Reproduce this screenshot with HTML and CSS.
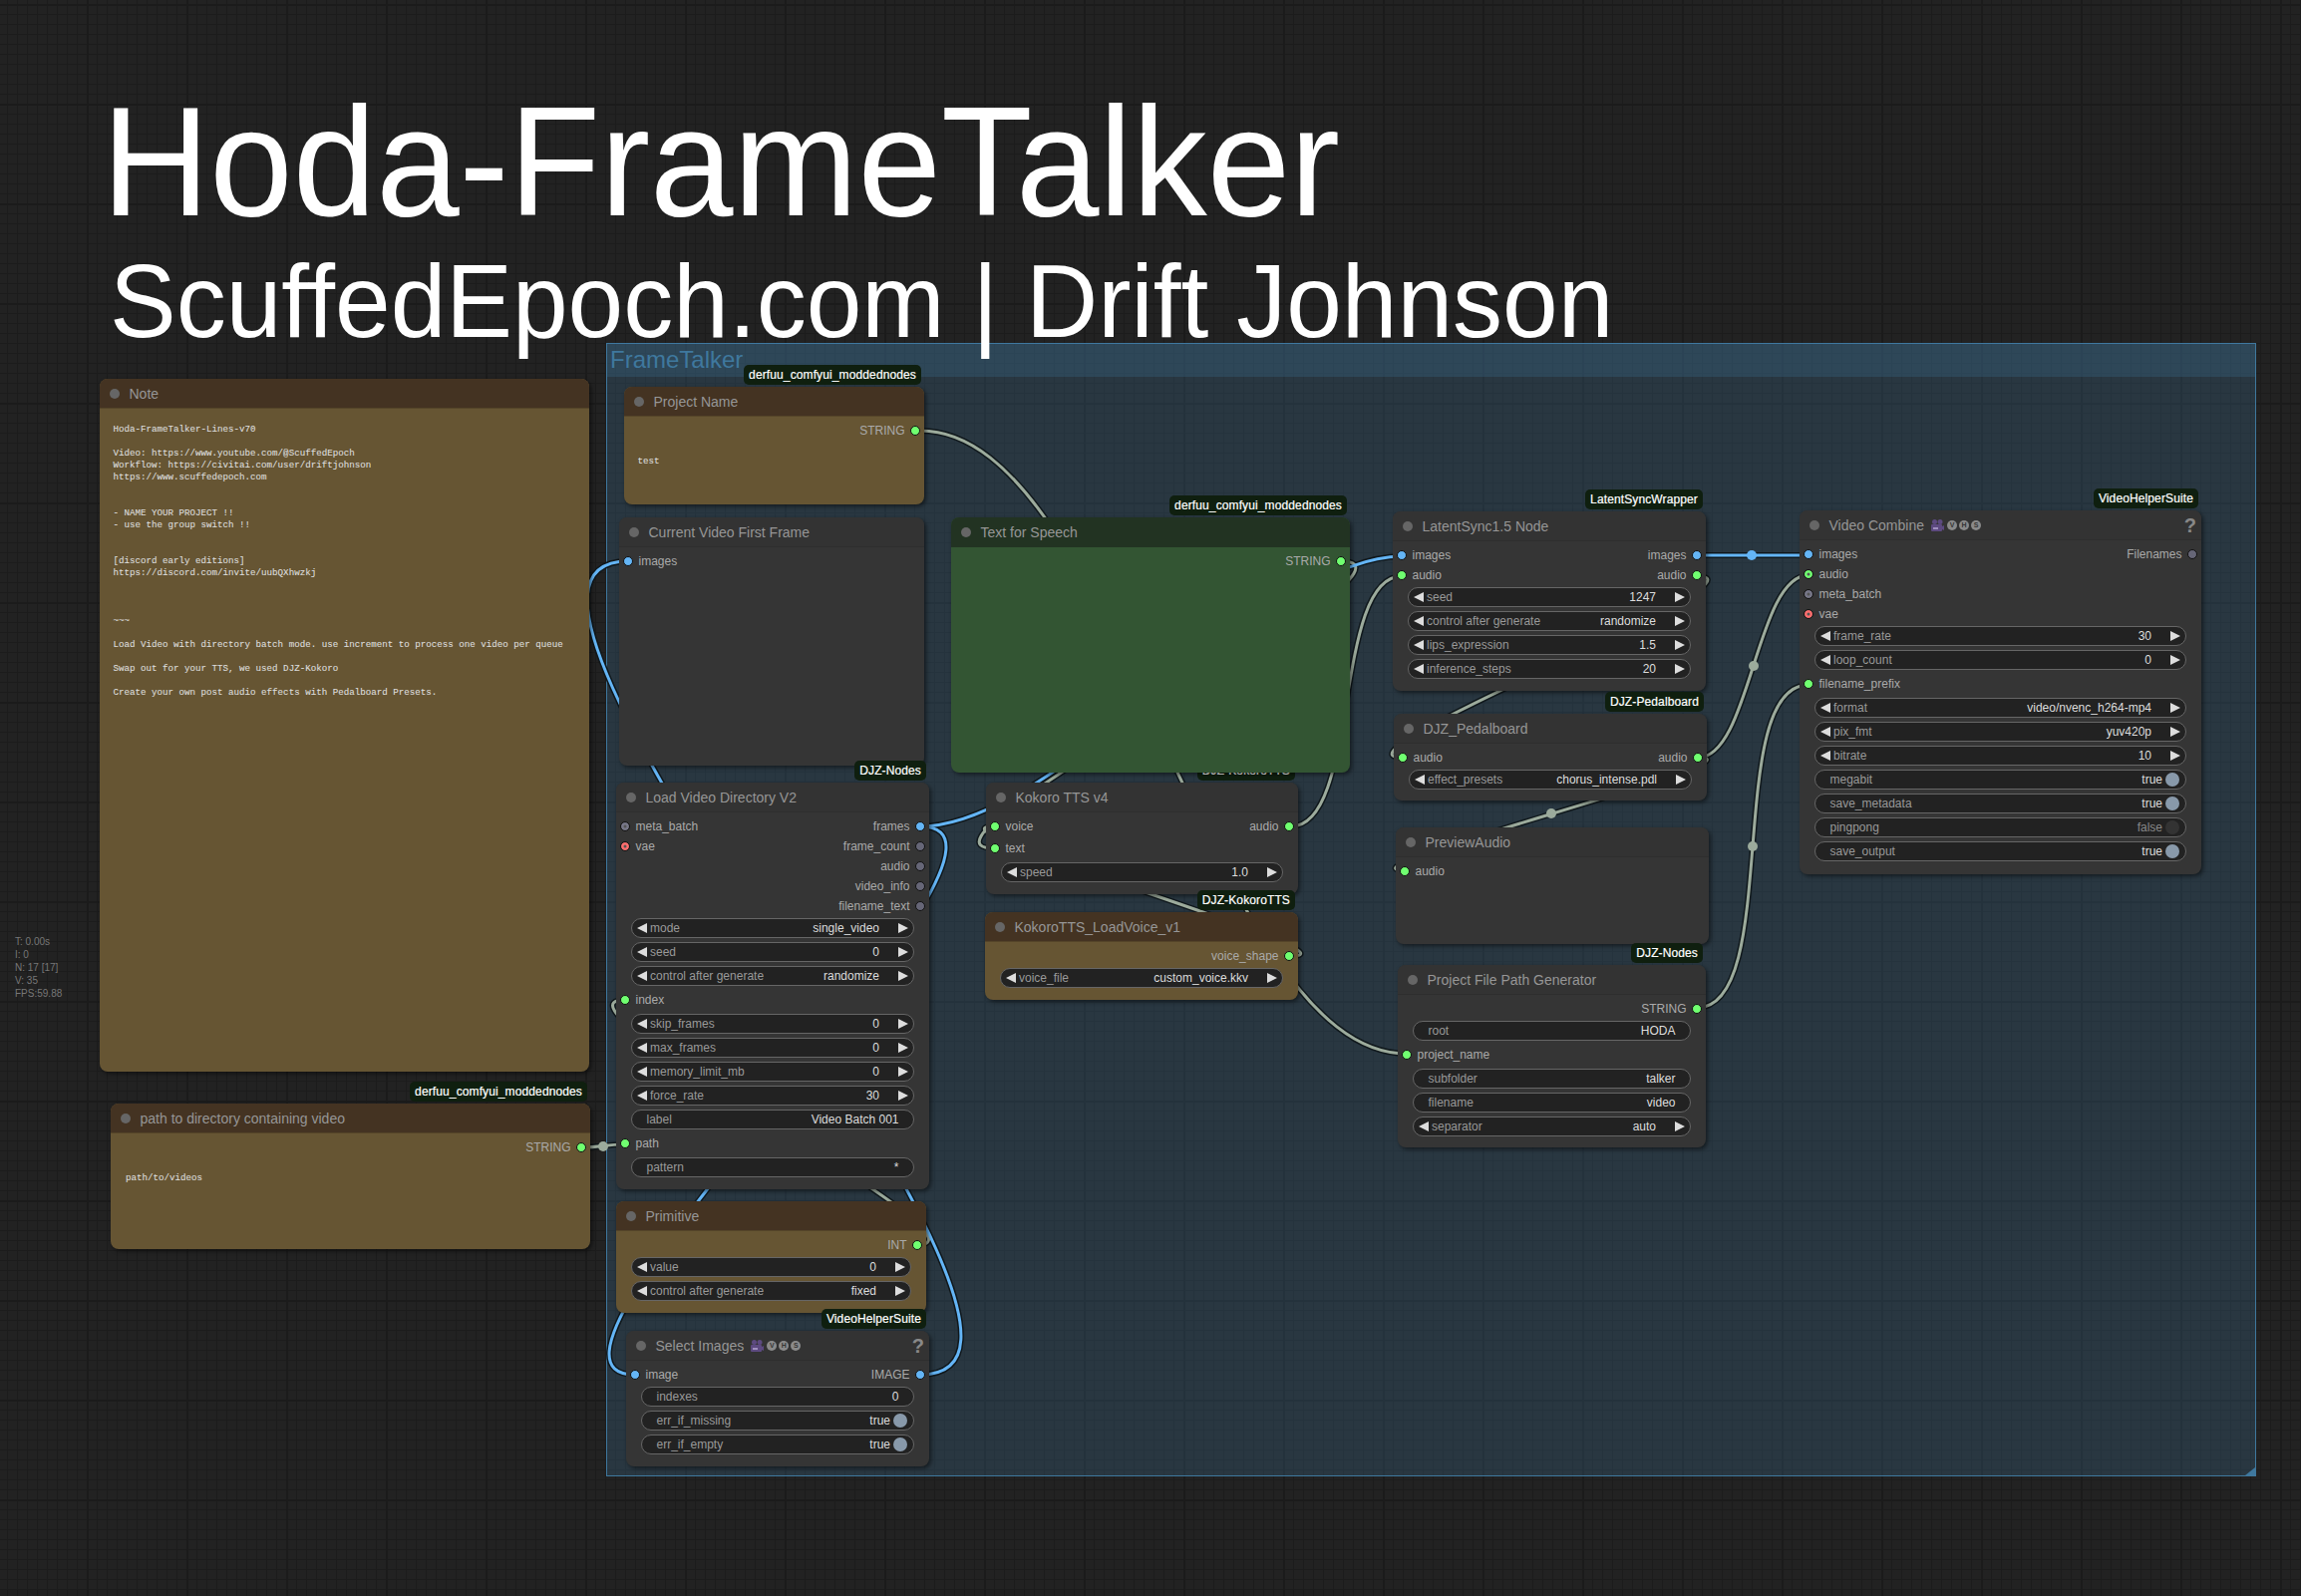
FILE: index.html
```html
<!DOCTYPE html>
<html lang="en">
<head>
  <meta charset="UTF-8">
  <title>Hoda-FrameTalker</title>
  <link rel="stylesheet" href="styles.css">
</head>
<body>

<div class="canvas">

  <div class="stats">T: 0.00s<br>I: 0<br>N: 17 [17]<br>V: 35<br>FPS:59.88</div>

  <div class="group">
    <div class="group-head">FrameTalker</div>
    <i class="group-grip"></i>
  </div>

  <!-- links, same curve as the graph editor draws them -->
  <svg class="links" width="2308" height="1601" viewBox="0 0 2308 1601">
    <defs>
      <path id="l1" d="M923 432C1122 432 1212 1057 1411 1057"/>
      <path id="l2" d="M923 829C1061 829 1268 558 1406 558"/>
      <path id="l3" d="M923 1379C1140 1379 413 563 630 563"/>
      <path id="l4" d="M923 829C1078 829 482 1379 637 1379"/>
      <path id="l5" d="M1345 563C1458 563 884 851 997 851"/>
      <path id="l6" d="M1295 959C1376 959 916 829 997 829"/>
      <path id="l7" d="M1295 829C1364 829 1337 578 1406 578"/>
      <path id="l8" d="M1702 578C1789 578 1320 760 1407 760"/>
      <path id="l9" d="M1703 760C1756 760 1761 577 1814 577"/>
      <path id="l10" d="M1703 760C1782 760 1330 873 1409 873"/>
      <path id="l11" d="M1702 557L1814 557"/>
      <path id="l12" d="M1702 1011C1788 1011 1728 687 1814 687"/>
      <path id="l13" d="M583 1151C605 1151 605 1148 627 1148"/>
      <path id="l14" d="M919 1249C1014 1249 532 1003 627 1003"/>
    </defs>
    <g class="link-shade">
      <use href="#l1"/><use href="#l2"/><use href="#l3"/><use href="#l4"/><use href="#l5"/><use href="#l6"/><use href="#l7"/>
      <use href="#l8"/><use href="#l9"/><use href="#l10"/><use href="#l11"/><use href="#l12"/><use href="#l13"/><use href="#l14"/>
    </g>
    <g class="link-string">
      <use href="#l1"/><use href="#l5"/><use href="#l6"/><use href="#l7"/><use href="#l8"/>
      <use href="#l9"/><use href="#l10"/><use href="#l12"/><use href="#l13"/><use href="#l14"/>
      <circle cx="1759" cy="668" r="5"/>
      <circle cx="1556" cy="816" r="5"/>
      <circle cx="1758" cy="849" r="5"/>
      <circle cx="605" cy="1150" r="5"/>
    </g>
    <g class="link-image">
      <use href="#l2"/><use href="#l3"/><use href="#l4"/><use href="#l11"/>
      <circle cx="1757" cy="557" r="5"/>
    </g>
  </svg>

  <!-- Note -->
  <div class="node brown n-note">
    <div class="node-title"><i></i>Note</div>
    <pre class="node-text">Hoda-FrameTalker-Lines-v70

Video: https://www.youtube.com/@ScuffedEpoch
Workflow: https://civitai.com/user/driftjohnson
https://www.scuffedepoch.com


- NAME YOUR PROJECT !!
- use the group switch !!


[discord early editions]
https://discord.com/invite/uubQXhwzkj



~~~

Load Video with directory batch mode. use increment to process one video per queue

Swap out for your TTS, we used DJZ-Kokoro

Create your own post audio effects with Pedalboard Presets.</pre>
  </div>

  <!-- path to directory -->
  <div class="node brown n-path">
    <div class="badge">derfuu_comfyui_moddednodes</div>
    <div class="node-title"><i></i>path to directory containing video</div>
    <div class="node-body">
      <div class="row"><span class="out">STRING<b class="dot green"></b></span></div>
    </div>
    <pre class="node-text under-row">path/to/videos</pre>
  </div>

  <!-- Project Name -->
  <div class="node brown n-project">
    <div class="badge">derfuu_comfyui_moddednodes</div>
    <div class="node-title"><i></i>Project Name</div>
    <div class="node-body">
      <div class="row"><span class="out">STRING<b class="dot green"></b></span></div>
    </div>
    <pre class="node-text under-row">test</pre>
  </div>

  <!-- Current Video First Frame -->
  <div class="node n-current">
    <div class="node-title"><i></i>Current Video First Frame</div>
    <div class="node-body">
      <div class="row"><span class="in"><b class="dot blue"></b>images</span></div>
    </div>
  </div>

  <!-- Kokoro TTS -->
  <div class="node n-kokoro">
    <div class="badge">DJZ-KokoroTTS</div>
    <div class="node-title"><i></i>Kokoro TTS v4</div>
    <div class="node-body">
      <div class="row">
        <span class="in"><b class="dot green"></b>voice</span>
        <span class="out">audio<b class="dot green"></b></span>
      </div>
      <div class="row spaced"><span class="in"><b class="dot green"></b>text</span></div>
      <div class="widget num"><i class="arrow-l"></i><span class="w-label">speed</span><span class="w-value">1.0</span><i class="arrow-r"></i></div>
    </div>
  </div>

  <!-- Text for Speech -->
  <div class="node green-node n-speech">
    <div class="badge">derfuu_comfyui_moddednodes</div>
    <div class="node-title"><i></i>Text for Speech</div>
    <div class="node-body">
      <div class="row"><span class="out">STRING<b class="dot green"></b></span></div>
    </div>
  </div>

  <!-- Load Video Directory -->
  <div class="node n-load">
    <div class="badge">DJZ-Nodes</div>
    <div class="node-title"><i></i>Load Video Directory V2</div>
    <div class="node-body">
      <div class="row">
        <span class="in"><b class="dot grey ring"></b>meta_batch</span>
        <span class="out">frames<b class="dot blue"></b></span>
      </div>
      <div class="row">
        <span class="in"><b class="dot red ring"></b>vae</span>
        <span class="out">frame_count<b class="dot grey"></b></span>
      </div>
      <div class="row"><span class="out">audio<b class="dot grey"></b></span></div>
      <div class="row"><span class="out">video_info<b class="dot grey"></b></span></div>
      <div class="row"><span class="out">filename_text<b class="dot grey"></b></span></div>
      <div class="widget num"><i class="arrow-l"></i><span class="w-label">mode</span><span class="w-value">single_video</span><i class="arrow-r"></i></div>
      <div class="widget num"><i class="arrow-l"></i><span class="w-label">seed</span><span class="w-value">0</span><i class="arrow-r"></i></div>
      <div class="widget num"><i class="arrow-l"></i><span class="w-label">control after generate</span><span class="w-value">randomize</span><i class="arrow-r"></i></div>
      <div class="row"><span class="in"><b class="dot green"></b>index</span></div>
      <div class="widget num"><i class="arrow-l"></i><span class="w-label">skip_frames</span><span class="w-value">0</span><i class="arrow-r"></i></div>
      <div class="widget num"><i class="arrow-l"></i><span class="w-label">max_frames</span><span class="w-value">0</span><i class="arrow-r"></i></div>
      <div class="widget num"><i class="arrow-l"></i><span class="w-label">memory_limit_mb</span><span class="w-value">0</span><i class="arrow-r"></i></div>
      <div class="widget num"><i class="arrow-l"></i><span class="w-label">force_rate</span><span class="w-value">30</span><i class="arrow-r"></i></div>
      <div class="widget"><span class="w-label">label</span><span class="w-value">Video Batch 001</span></div>
      <div class="row"><span class="in"><b class="dot green"></b>path</span></div>
      <div class="widget"><span class="w-label">pattern</span><span class="w-value">*</span></div>
    </div>
  </div>

  <!-- KokoroTTS_LoadVoice -->
  <div class="node brown n-voice">
    <div class="badge">DJZ-KokoroTTS</div>
    <div class="node-title"><i></i>KokoroTTS_LoadVoice_v1</div>
    <div class="node-body">
      <div class="row"><span class="out">voice_shape<b class="dot green"></b></span></div>
      <div class="widget num"><i class="arrow-l"></i><span class="w-label">voice_file</span><span class="w-value">custom_voice.kkv</span><i class="arrow-r"></i></div>
    </div>
  </div>

  <!-- Primitive -->
  <div class="node brown n-primitive">
    <div class="node-title"><i></i>Primitive</div>
    <div class="node-body">
      <div class="row"><span class="out">INT<b class="dot green"></b></span></div>
      <div class="widget num"><i class="arrow-l"></i><span class="w-label">value</span><span class="w-value">0</span><i class="arrow-r"></i></div>
      <div class="widget num"><i class="arrow-l"></i><span class="w-label">control after generate</span><span class="w-value">fixed</span><i class="arrow-r"></i></div>
    </div>
  </div>

  <!-- Select Images -->
  <div class="node n-select">
    <div class="badge">VideoHelperSuite</div>
    <div class="node-title"><i></i><span>Select Images</span>
      <svg class="cam" width="13" height="12" viewBox="0 0 13 12"><circle cx="3.5" cy="2.5" r="2.5"/><circle cx="9" cy="2.5" r="2.5"/><rect x="0" y="5" width="11" height="7" rx="1"/><path d="M11 7l2-1v5l-2-1z"/><rect x="2" y="8" width="5" height="2" fill="#a08fc0"/></svg>
      <span class="vhs">V</span><span class="vhs">H</span><span class="vhs">S</span>
      <span class="help">?</span>
    </div>
    <div class="node-body">
      <div class="row">
        <span class="in"><b class="dot blue"></b>image</span>
        <span class="out">IMAGE<b class="dot blue"></b></span>
      </div>
      <div class="widget"><span class="w-label">indexes</span><span class="w-value">0</span></div>
      <div class="widget toggle"><span class="w-label">err_if_missing</span><span class="w-value">true</span><i class="knob"></i></div>
      <div class="widget toggle"><span class="w-label">err_if_empty</span><span class="w-value">true</span><i class="knob"></i></div>
    </div>
  </div>

  <!-- LatentSync -->
  <div class="node n-latent">
    <div class="badge">LatentSyncWrapper</div>
    <div class="node-title"><i></i>LatentSync1.5 Node</div>
    <div class="node-body">
      <div class="row">
        <span class="in"><b class="dot blue"></b>images</span>
        <span class="out">images<b class="dot blue"></b></span>
      </div>
      <div class="row">
        <span class="in"><b class="dot green"></b>audio</span>
        <span class="out">audio<b class="dot green"></b></span>
      </div>
      <div class="widget num"><i class="arrow-l"></i><span class="w-label">seed</span><span class="w-value">1247</span><i class="arrow-r"></i></div>
      <div class="widget num"><i class="arrow-l"></i><span class="w-label">control after generate</span><span class="w-value">randomize</span><i class="arrow-r"></i></div>
      <div class="widget num"><i class="arrow-l"></i><span class="w-label">lips_expression</span><span class="w-value">1.5</span><i class="arrow-r"></i></div>
      <div class="widget num"><i class="arrow-l"></i><span class="w-label">inference_steps</span><span class="w-value">20</span><i class="arrow-r"></i></div>
    </div>
  </div>

  <!-- Pedalboard -->
  <div class="node n-pedal">
    <div class="badge">DJZ-Pedalboard</div>
    <div class="node-title"><i></i>DJZ_Pedalboard</div>
    <div class="node-body">
      <div class="row">
        <span class="in"><b class="dot green"></b>audio</span>
        <span class="out">audio<b class="dot green"></b></span>
      </div>
      <div class="widget num"><i class="arrow-l"></i><span class="w-label">effect_presets</span><span class="w-value">chorus_intense.pdl</span><i class="arrow-r"></i></div>
    </div>
  </div>

  <!-- PreviewAudio -->
  <div class="node n-preview">
    <div class="node-title"><i></i>PreviewAudio</div>
    <div class="node-body">
      <div class="row"><span class="in"><b class="dot green"></b>audio</span></div>
    </div>
  </div>

  <!-- Project File Path -->
  <div class="node n-pfp">
    <div class="badge">DJZ-Nodes</div>
    <div class="node-title"><i></i>Project File Path Generator</div>
    <div class="node-body">
      <div class="row"><span class="out">STRING<b class="dot green"></b></span></div>
      <div class="widget"><span class="w-label">root</span><span class="w-value">HODA</span></div>
      <div class="row"><span class="in"><b class="dot green"></b>project_name</span></div>
      <div class="widget"><span class="w-label">subfolder</span><span class="w-value">talker</span></div>
      <div class="widget"><span class="w-label">filename</span><span class="w-value">video</span></div>
      <div class="widget num"><i class="arrow-l"></i><span class="w-label">separator</span><span class="w-value">auto</span><i class="arrow-r"></i></div>
    </div>
  </div>

  <!-- Video Combine -->
  <div class="node n-combine">
    <div class="badge">VideoHelperSuite</div>
    <div class="node-title"><i></i><span>Video Combine</span>
      <svg class="cam" width="13" height="12" viewBox="0 0 13 12"><circle cx="3.5" cy="2.5" r="2.5"/><circle cx="9" cy="2.5" r="2.5"/><rect x="0" y="5" width="11" height="7" rx="1"/><path d="M11 7l2-1v5l-2-1z"/><rect x="2" y="8" width="5" height="2" fill="#a08fc0"/></svg>
      <span class="vhs">V</span><span class="vhs">H</span><span class="vhs">S</span>
      <span class="help">?</span>
    </div>
    <div class="node-body">
      <div class="row">
        <span class="in"><b class="dot blue"></b>images</span>
        <span class="out">Filenames<b class="dot grey"></b></span>
      </div>
      <div class="row"><span class="in"><b class="dot green ring"></b>audio</span></div>
      <div class="row"><span class="in"><b class="dot grey ring"></b>meta_batch</span></div>
      <div class="row"><span class="in"><b class="dot red ring"></b>vae</span></div>
      <div class="widget num"><i class="arrow-l"></i><span class="w-label">frame_rate</span><span class="w-value">30</span><i class="arrow-r"></i></div>
      <div class="widget num"><i class="arrow-l"></i><span class="w-label">loop_count</span><span class="w-value">0</span><i class="arrow-r"></i></div>
      <div class="row"><span class="in"><b class="dot green"></b>filename_prefix</span></div>
      <div class="widget num"><i class="arrow-l"></i><span class="w-label">format</span><span class="w-value">video/nvenc_h264-mp4</span><i class="arrow-r"></i></div>
      <div class="widget num"><i class="arrow-l"></i><span class="w-label">pix_fmt</span><span class="w-value">yuv420p</span><i class="arrow-r"></i></div>
      <div class="widget num"><i class="arrow-l"></i><span class="w-label">bitrate</span><span class="w-value">10</span><i class="arrow-r"></i></div>
      <div class="widget toggle"><span class="w-label">megabit</span><span class="w-value">true</span><i class="knob"></i></div>
      <div class="widget toggle"><span class="w-label">save_metadata</span><span class="w-value">true</span><i class="knob"></i></div>
      <div class="widget toggle off"><span class="w-label">pingpong</span><span class="w-value">false</span><i class="knob"></i></div>
      <div class="widget toggle"><span class="w-label">save_output</span><span class="w-value">true</span><i class="knob"></i></div>
    </div>
  </div>

  <div class="big-title">Hoda-FrameTalker</div>
  <div class="sub-title">ScuffedEpoch.com | Drift Johnson</div>

</div>

</body>
</html>
```

FILE: styles.css
```css
html, body {
  margin: 0;
  padding: 0;
  background: #202020;
}

.canvas {
  position: relative;
  width: 2308px;
  height: 1601px;
  overflow: hidden;
  font-family: "Liberation Sans", Arial, sans-serif;
  background-color: #222;
  background-image:
    linear-gradient(90deg, #1b1b1b 2px, transparent 2px),
    linear-gradient(#1b1b1b 2px, transparent 2px),
    linear-gradient(90deg, #1c1c1c 1px, transparent 1px),
    linear-gradient(#1c1c1c 1px, transparent 1px);
  background-size: 100px 100px, 100px 100px, 10px 10px, 10px 10px;
  background-position: 87px 4px, 87px 4px, 7px 4px, 7px 4px;
}

.stats {
  position: absolute;
  left: 15px;
  top: 938px;
  font-size: 10px;
  line-height: 13px;
  color: #777;
}

.big-title, .sub-title {
  position: absolute;
  color: #fff;
  white-space: nowrap;
  line-height: 1;
  transform: scaleY(1.04);
  transform-origin: 0 85%;
}

.big-title {
  left: 102px;
  top: 89px;
  font-size: 150px;
}

.sub-title {
  left: 110px;
  top: 253px;
  font-size: 100px;
}

/* group */
.group {
  position: absolute;
  left: 608px;
  top: 344px;
  width: 1655px;
  height: 1137px;
  box-sizing: border-box;
  border: 1.5px solid #3f789e;
  background: rgba(63, 120, 158, .25);
}

.group-head {
  height: 33px;
  padding-left: 3px;
  background: rgba(63, 120, 158, .25);
  color: #3f789e;
  font-size: 24px;
  line-height: 31px;
}

.group-grip {
  position: absolute;
  right: 0;
  bottom: 0;
  width: 0;
  height: 0;
  border-left: 10px solid transparent;
  border-bottom: 8px solid #3f789e;
}

/* links */
.links {
  position: absolute;
  left: 0;
  top: 0;
}

.links path, .links use {
  fill: none;
}

.link-shade {
  stroke: #10181c;
  stroke-width: 6;
}

.link-string {
  stroke: #9cab9c;
  stroke-width: 3;
}

.link-image {
  stroke: #64b5f6;
  stroke-width: 3;
}

.link-string circle, .link-image circle {
  stroke: none;
}

.link-string circle { fill: #9cab9c; }
.link-image circle { fill: #64b5f6; }

/* nodes */
.node {
  position: absolute;
  box-sizing: border-box;
  background: #353535;
  border-radius: 8px;
  box-shadow: 2px 2px 4px rgba(0, 0, 0, .5);
}

.node-title {
  position: relative;
  display: flex;
  align-items: center;
  box-sizing: border-box;
  height: 30px;
  padding-left: 29.5px;
  border-radius: 8px 8px 0 0;
  background: #333;
  border-bottom: 1px solid #2e2e2e;
  color: #969696;
  font-size: 14px;
  white-space: nowrap;
}

.node-title > i {
  position: absolute;
  left: 10px;
  top: 10px;
  width: 10px;
  height: 10px;
  border-radius: 50%;
  background: #666;
}

.brown { background: #665533; }
.brown .node-title { background: #443322; border-bottom-color: #554529; }

.green-node { background: #335533; }
.green-node .node-title { background: #223322; border-bottom-color: #223322; }

.badge {
  position: absolute;
  right: 3px;
  bottom: calc(100% + 2px);
  height: 20px;
  padding: 0 5px;
  border-radius: 5px;
  background: #0f1f0f;
  color: #fff;
  font-size: 12px;
  letter-spacing: .12px;
  line-height: 20px;
  white-space: nowrap;
  -webkit-text-stroke: .2px #fff;
}

.node-body {
  padding-top: 4px;
}

.node-text {
  margin: 0;
  padding: 15px 0 0 13.5px;
  color: #ddd;
  font-family: "Liberation Mono", monospace;
  font-size: 9.19px;
  line-height: 12px;
  -webkit-text-stroke: .1px #ddd;
}

.n-path .node-text {
  padding-left: 15px;
}

/* slots */
.row {
  display: flex;
  justify-content: space-between;
  height: 20px;
  padding: 0 4px;
  color: #aaa;
  font-size: 12px;
  line-height: 20px;
}

.row.spaced { margin-top: 2px; }

.in, .out {
  display: flex;
  align-items: center;
  gap: 5.5px;
}

.out { margin-left: auto; }

.dot {
  width: 10px;
  height: 10px;
  box-sizing: border-box;
  border: 1px solid #111;
  border-radius: 50%;
  background: #667;
}

.dot.green { background: #70ff70; }
.dot.blue { background: #64b5f6; }
.dot.grey { background: #667; }
.dot.red { background: #ff6e6e; }

.dot.ring { box-shadow: inset 0 0 0 2.5px currentColor; background: #555; }
.dot.green.ring { color: #70ff70; }
.dot.grey.ring { color: #778; }
.dot.red.ring { color: #ff6e6e; }

/* widgets */
.widget {
  display: flex;
  align-items: center;
  box-sizing: border-box;
  height: 20px;
  margin: 4px 15px 0;
  padding: 0 14.5px;
  border: 1px solid #666;
  border-radius: 10px;
  background: #222;
  color: #ddd;
  font-size: 12px;
}

.row + .widget { margin-top: 2px; }
.widget + .row + .widget, .row.spaced + .widget { margin-top: 4px; }
.widget + .row { margin-top: 4px; }

.w-label { color: #999; }
.w-value { margin-left: auto; }

.widget.num { padding: 0 5px; }
.widget.num .w-label { margin-left: 3px; }
.widget.num .w-value { margin-right: 19px; }

.arrow-l, .arrow-r {
  width: 0;
  height: 0;
  border-top: 5.5px solid transparent;
  border-bottom: 5.5px solid transparent;
}

.arrow-l { border-right: 10px solid #ddd; }
.arrow-r { border-left: 10px solid #ddd; }

.widget.toggle { padding-right: 6px; }
.widget.toggle .w-value { margin-right: 3px; }

.knob {
  width: 14px;
  height: 14px;
  border-radius: 50%;
  background: #8899aa;
}

.toggle.off .w-value { color: #888; }
.toggle.off .knob { background: #333; }

/* title icons */
.cam {
  margin-left: 7px;
  fill: #5d4a80;
}

.vhs {
  width: 10px;
  height: 10px;
  margin-left: 2px;
  border-radius: 50%;
  background: #8a8a8a;
  color: #353535;
  font-size: 7px;
  font-weight: bold;
  line-height: 10px;
  text-align: center;
}

.cam + .vhs { margin-left: 3px; }

.help {
  position: absolute;
  right: 5px;
  top: 3px;
  color: #888;
  font-size: 20px;
  font-weight: bold;
  line-height: 24px;
}

/* where each node sits on the canvas */
.n-note { left: 100px; top: 380px; width: 491px; height: 695px; }
.n-path { left: 111px; top: 1107px; width: 481px; height: 146px; }
.n-project { left: 626px; top: 388px; width: 301px; height: 118px; }
.n-current { left: 621px; top: 519px; width: 306px; height: 249px; }
.n-speech { left: 954px; top: 519px; width: 400px; height: 256px; }
.n-load { left: 618px; top: 785px; width: 314px; height: 408px; }
.n-kokoro { left: 989px; top: 785px; width: 313px; height: 112px; }
.n-voice { left: 988px; top: 915px; width: 314px; height: 88px; }
.n-primitive { left: 618px; top: 1205px; width: 311px; height: 112px; }
.n-select { left: 628px; top: 1335px; width: 304px; height: 136px; }
.n-latent { left: 1397px; top: 513px; width: 314px; height: 180px; }
.n-pedal { left: 1398px; top: 716px; width: 314px; height: 87px; }
.n-preview { left: 1400px; top: 830px; width: 314px; height: 117px; }
.n-pfp { left: 1402px; top: 968px; width: 309px; height: 183px; }
.n-combine { left: 1805px; top: 512px; width: 403px; height: 365px; }
```
